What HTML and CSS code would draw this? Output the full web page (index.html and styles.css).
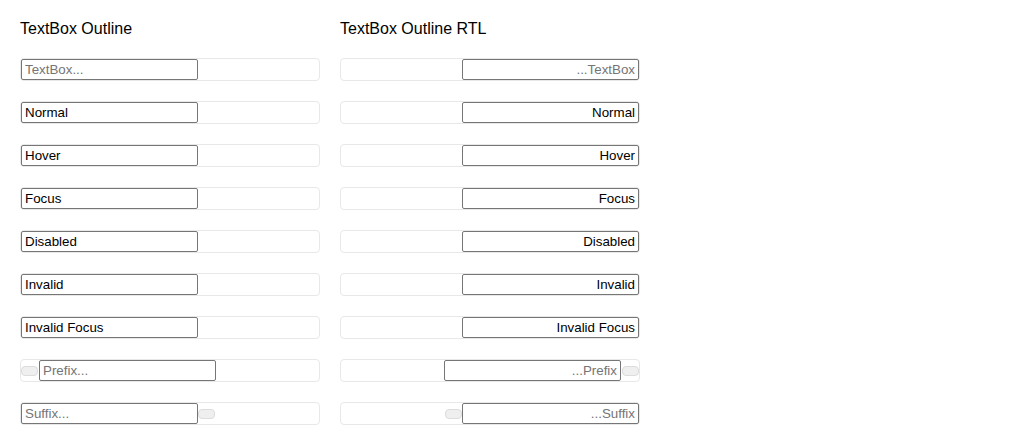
FILE: index.html
```html
<!DOCTYPE html>
<html>
<head>
<meta charset="utf-8">
<link rel="stylesheet" href="styles.css">
</head>
<body>
<div class="page">
  <section class="col">
    <h2 class="title">TextBox Outline</h2>
    <div class="rows">
      <div class="box"><input class="tb" placeholder="TextBox..."></div>
      <div class="box"><input class="tb" value="Normal"></div>
      <div class="box"><input class="tb" value="Hover"></div>
      <div class="box"><input class="tb" value="Focus"></div>
      <div class="box"><input class="tb" value="Disabled"></div>
      <div class="box"><input class="tb" value="Invalid"></div>
      <div class="box"><input class="tb" value="Invalid Focus"></div>
      <div class="box"><span class="addon addon-prefix"></span><input class="tb" placeholder="Prefix..."></div>
      <div class="box"><input class="tb" placeholder="Suffix..."><span class="addon addon-suffix"></span></div>
    </div>
  </section>
  <section class="col">
    <h2 class="title">TextBox Outline RTL</h2>
    <div class="rows" dir="rtl">
      <div class="box"><input class="tb" dir="rtl" placeholder="TextBox..."></div>
      <div class="box"><input class="tb" dir="rtl" value="Normal"></div>
      <div class="box"><input class="tb" dir="rtl" value="Hover"></div>
      <div class="box"><input class="tb" dir="rtl" value="Focus"></div>
      <div class="box"><input class="tb" dir="rtl" value="Disabled"></div>
      <div class="box"><input class="tb" dir="rtl" value="Invalid"></div>
      <div class="box"><input class="tb" dir="rtl" value="Invalid Focus"></div>
      <div class="box"><span class="addon addon-prefix"></span><input class="tb" dir="rtl" placeholder="Prefix..."></div>
      <div class="box"><input class="tb" dir="rtl" placeholder="Suffix..."><span class="addon addon-suffix"></span></div>
    </div>
  </section>
</div>
</body>
</html>
```
FILE: styles.css
```css
html, body {
  margin: 0;
  padding: 0;
  background: #ffffff;
}
body {
  font-family: "Liberation Sans", Arial, sans-serif;
  color: #000000;
}
.page {
  display: flex;
  gap: 20px;
  padding: 20px;
}
.col {
  width: 300px;
}
.title {
  margin: 0 0 20px 0;
  font-size: 16px;
  font-weight: normal;
  line-height: 18px;
}
.rows {
  display: flex;
  flex-direction: column;
  gap: 20px;
}
.box {
  box-sizing: border-box;
  width: 300px;
  height: 23px;
  border: 1px solid #e8e8e8;
  border-radius: 4px;
  display: flex;
  align-items: center;
}
.tb {
  box-sizing: border-box;
  width: 177px;
  height: 21px;
  margin: 0;
  border: 1px solid #767676;
  border-radius: 2px;
  padding: 1px 3px;
  font-family: "Liberation Sans", Arial, sans-serif;
  font-size: 13.333px;
  color: #000000;
  background: #ffffff;
  outline: none;
  align-self: flex-start;
}
.tb::placeholder {
  color: #757575;
}
.addon {
  box-sizing: border-box;
  width: 17px;
  height: 10px;
  margin-top: 1px;
  background: #efefef;
  border: 1px solid #dcdcdc;
  border-radius: 4px;
  flex: none;
}
.addon-prefix {
  margin-inline-end: 1px;
}
.addon-suffix {
  margin-inline-start: 0;
}
```
